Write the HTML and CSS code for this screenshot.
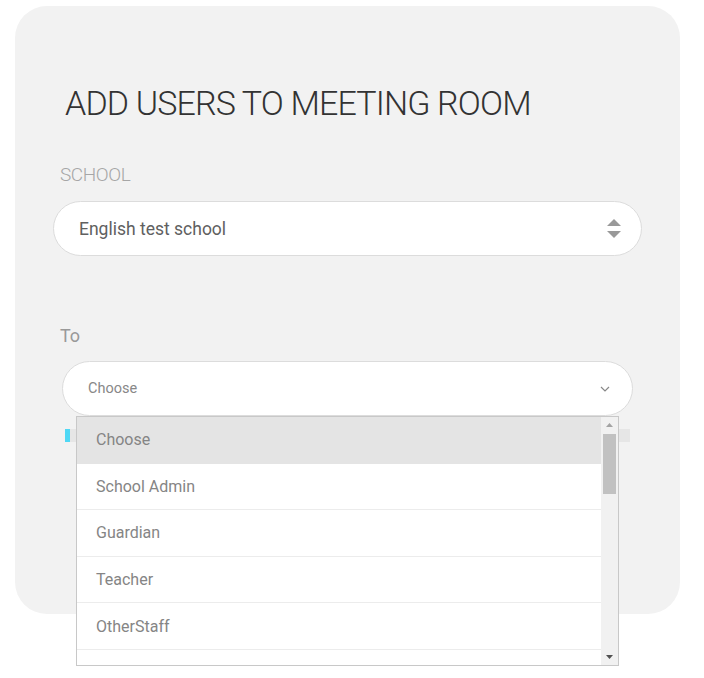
FILE: index.html
```html
<!DOCTYPE html>
<html>
<head>
<meta name="viewport" content="width=device-width, initial-scale=1">
<link rel="stylesheet" href="styles.css">
</head>
<body>

<div class="card">
  <h1 class="title">ADD USERS TO MEETING ROOM</h1>

  <label class="field-label">SCHOOL</label>
  <div class="select school-select">
    <span>English test school</span>
    <svg class="updown" width="14" height="20" viewBox="0 0 14 20">
      <polygon points="7,0 14,7 0,7" fill="#999"/>
      <polygon points="0,12 14,12 7,19" fill="#999"/>
    </svg>
  </div>

  <label class="field-label to-label">To</label>
  <div class="to-wrap">
    <div class="select to-select">
      <span>Choose</span>
      <svg class="chevron" width="10" height="6" viewBox="0 0 10 6">
        <polyline points="1,1 5,5 9,1" fill="none" stroke="#888" stroke-width="1.2"/>
      </svg>
    </div>
    <div class="progress"><div class="progress-fill" style="width:5px"></div></div>

    <!-- opened options list -->
    <div class="dropdown">
      <ul class="options">
        <li class="selected">Choose</li>
        <li>School Admin</li>
        <li>Guardian</li>
        <li>Teacher</li>
        <li>OtherStaff</li>
        <li></li>
      </ul>
      <div class="scrollbar">
        <svg class="arrow" width="17" height="17" viewBox="0 0 17 17">
          <polygon points="8.5,6 12,10 5,10" fill="#a3a3a3"/>
        </svg>
        <div class="track"><div class="thumb"></div></div>
        <svg class="arrow" width="17" height="17" viewBox="0 0 17 17">
          <polygon points="5,7 12,7 8.5,11" fill="#505050"/>
        </svg>
      </div>
    </div>
  </div>
</div>

</body>
</html>
```

FILE: styles.css
```css
body {
  margin: 0;
  min-height: 100vh;
  padding: 6px 24px 0 15px;
  font-family: Roboto, "Liberation Sans", sans-serif;
  background: #fff;
}

* {
  box-sizing: border-box;
}

.card {
  width: 665px;
  height: 608px;
  padding: 77px 38px 0 38px;
  background: #f2f2f2;
  border-radius: 32px;
}

.title {
  margin: 0 0 40px 0;
  padding-left: 12px;
  font-size: 34px;
  line-height: 40px;
  font-weight: 300;
  letter-spacing: -0.85px;
  color: #333;
}

.field-label {
  display: block;
  margin: 0 0 14px 7px;
  font-size: 19px;
  line-height: 24px;
  font-weight: 300;
  letter-spacing: -0.4px;
  color: #a6a6a6;
}

.to-label {
  margin-top: 69px;
  font-size: 18px;
  line-height: 22px;
  font-weight: 400;
  letter-spacing: 0;
  color: #999;
}

/* rounded select boxes */
.select {
  display: flex;
  align-items: center;
  justify-content: space-between;
  height: 55px;
  padding: 0 20px 0 25px;
  background: #fff;
  border: 1px solid #dcdcdc;
  border-radius: 28px;
}

.school-select {
  font-size: 17.5px;
  color: #606060;
}

.to-wrap {
  position: relative;
  margin: 0 9px;
}

.to-select {
  font-size: 14.5px;
  color: #888;
  padding-right: 22px;
}

.progress {
  margin: 13px 0 0 3px;
  width: 565px;
  height: 13px;
  background: #e6e6e6;
}

.progress-fill {
  height: 100%;
  background: #4fd8f5;
}

/* open dropdown over the card */
.dropdown {
  position: absolute;
  top: 55px;
  left: 14px;
  width: 543px;
  height: 250px;
  display: flex;
  background: #fff;
  border: 1px solid #c8c8c8;
  overflow: hidden;
}

.options {
  flex: 1;
  margin: 0;
  padding: 0;
  list-style: none;
}

.options li {
  height: 46.6px;
  padding-left: 19px;
  display: flex;
  align-items: center;
  font-size: 16px;
  color: #858585;
  border-bottom: 1px solid #ececec;
}

.options li.selected {
  background: #e4e4e4;
  border-bottom-color: #e4e4e4;
}

.scrollbar {
  width: 17px;
  display: flex;
  flex-direction: column;
  background: #f1f1f1;
}

.arrow {
  display: block;
  flex: none;
}

.track {
  flex: 1;
  padding: 0 2px;
}

.thumb {
  height: 60px;
  background: #c1c1c1;
}
```
